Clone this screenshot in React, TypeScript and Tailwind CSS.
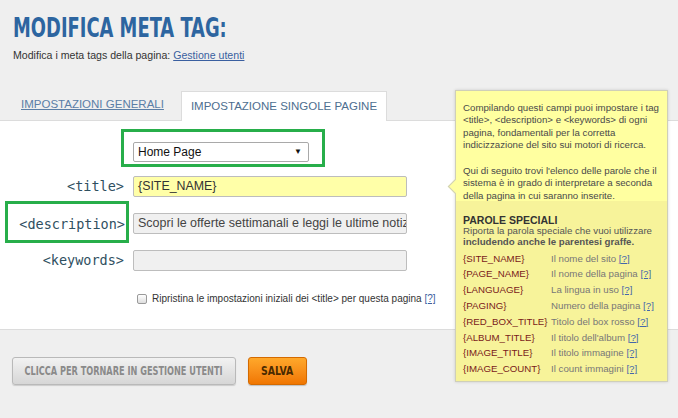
export default function App() {
  const words: [string, string][] = [
    ["{SITE_NAME}", "Il nome del sito"],
    ["{PAGE_NAME}", "Il nome della pagina"],
    ["{LANGUAGE}", "La lingua in uso"],
    ["{PAGING}", "Numero della pagina"],
    ["{RED_BOX_TITLE}", "Titolo del box rosso"],
    ["{ALBUM_TITLE}", "Il titolo dell'album"],
    ["{IMAGE_TITLE}", "Il titolo immagine"],
    ["{IMAGE_COUNT}", "Il count immagini"],
  ];
  return (
    <div className="relative w-[678px] h-[418px] overflow-hidden bg-[#efefef] font-['Liberation_Sans',Arial,sans-serif] text-[#333]">
      {/* Header */}
      <div className="pl-[13px] pt-[13px]">
        <h1 className="h-[30px] font-['DejaVu_Sans_Condensed',sans-serif] font-bold text-[26px] leading-[30px] text-[#2d65a0] whitespace-nowrap">
          <span className="inline-block origin-left scale-x-[0.765]">MODIFICA META TAG:</span>
        </h1>
        <p className="mt-[5px] text-[10.6px] leading-[14px] text-[#333]">
          Modifica i meta tags della pagina:{" "}
          <a className="text-[#3a5fa0] underline">Gestione utenti</a>
        </p>
      </div>

      {/* Tabs */}
      <div className="mt-[29px] flex items-end h-[29px] pl-[21px]">
        <span className="text-[11.5px] leading-[14px] mb-[9px] text-[#5b7ea6] underline whitespace-nowrap">IMPOSTAZIONI GENERALI</span>
        <div className="ml-[17px] h-[30px] -mb-px bg-white border border-b-0 border-[#dcdcdc] px-[9px] flex items-center text-[11.5px] text-[#4d6e8f] relative z-10 whitespace-nowrap">
          IMPOSTAZIONE SINGOLE PAGINE
        </div>
      </div>

      {/* Panel */}
      <div className="h-[210px] bg-white border-t border-b border-[#dcdcdc] pt-[8px]">
        <div className="ml-[121px] w-[204px] h-[38px] border-[3px] border-[#27ae4a] pl-[9px] pt-[10px]">
          <div className="w-[176px] h-[20px] border border-[#a9a9a9] rounded-[2px] bg-white flex items-center justify-between pl-[4px] pr-[6px] text-[12px] text-[#111]">
            <span>Home Page</span>
            <span className="text-[8px]">▼</span>
          </div>
        </div>

        {/* title row */}
        <div className="mt-[9px] flex items-center">
          <div className="w-[129px] pr-[5px] text-right font-['DejaVu_Sans_Mono',monospace] text-[13.5px] text-[#2f4f5f]">&lt;title&gt;</div>
          <div className="ml-[4px] w-[274px] h-[21px] border border-[#bdbdbd] rounded-[2px] bg-[#ffffa8] pl-[4px] flex items-center text-[12.4px] text-[#333]">
            {"{SITE_NAME}"}
          </div>
        </div>

        {/* description row */}
        <div className="mt-[4px] flex items-start">
          <div className="w-[129px] flex justify-end">
            <div className="w-[124px] h-[42px] border-[3px] border-[#27ae4a] flex items-center justify-end pr-[1px] pt-[4px] font-['DejaVu_Sans_Mono',monospace] text-[13.5px] text-[#2f4f5f]">
              &lt;description&gt;
            </div>
          </div>
          <div className="mt-[12px] ml-[4px] w-[274px] h-[21px] border border-[#bdbdbd] rounded-[2px] bg-[#f0f0f0] pl-[4px] flex items-center text-[12.5px] text-[#444] overflow-hidden whitespace-nowrap">
            Scopri le offerte settimanali e leggi le ultime notizie
          </div>
        </div>

        {/* keywords row */}
        <div className="mt-[7px] flex items-center">
          <div className="w-[129px] pr-[5px] text-right font-['DejaVu_Sans_Mono',monospace] text-[13.5px] text-[#2f4f5f]">&lt;keywords&gt;</div>
          <div className="ml-[4px] w-[274px] h-[21px] border border-[#bdbdbd] rounded-[2px] bg-[#f0f0f0]" />
        </div>

        {/* checkbox row */}
        <div className="mt-[20px] ml-[137px] flex items-center text-[10px] text-[#333]">
          <span className="w-[10px] h-[10px] border border-[#9a9a9a] rounded-[2px] bg-gradient-to-b from-white to-[#dedede]" />
          <span className="ml-[5px] whitespace-nowrap">
            Ripristina le impostazioni iniziali dei &lt;title&gt; per questa pagina{" "}
            <span className="text-[#3a5fa0] underline">[?]</span>
          </span>
        </div>
      </div>

      {/* Buttons */}
      <div className="mt-[27px] ml-[12px] flex gap-[12px]">
        <div className="w-[224px] h-[28px] rounded-[3px] border border-[#b9b9b9] bg-gradient-to-b from-[#f2f2f2] to-[#d6d6d6] flex items-center justify-center font-['DejaVu_Sans_Condensed',sans-serif] font-bold text-[13px] text-[#8a8a8a] shadow-[0_1px_1px_rgba(0,0,0,0.15)] whitespace-nowrap">
          <span className="inline-block scale-x-[0.7]">CLICCA PER TORNARE IN GESTIONE UTENTI</span>
        </div>
        <div className="w-[59px] h-[28px] rounded-[3px] border border-[#d46a00] bg-gradient-to-b from-[#ffa82a] to-[#f07600] flex items-center justify-center font-['DejaVu_Sans_Condensed',sans-serif] font-bold text-[13px] text-[#4a2a00] shadow-[0_1px_1px_rgba(0,0,0,0.2)]">
          <span className="inline-block scale-x-[0.8]">SALVA</span>
        </div>
      </div>

      {/* Tooltip */}
      <div className="absolute left-[455px] top-[90px] w-[213px] h-[292px] border border-[#cfcfb8] bg-[#ffffa0] shadow-[0_0_3px_rgba(0,0,0,0.15)] text-[9.7px] text-[#4a4a4a] z-20 whitespace-nowrap">
        <div className="absolute left-[-6px] top-[90px] w-[11px] h-[11px] rotate-45 bg-[#ffffa0] border-l border-b border-[#cfcfb8]" />
        <div className="relative px-[7px] pt-[11px] leading-[12.3px] h-[110px]">
          <p>
            Compilando questi campi puoi impostare i tag
            <br />
            &lt;title&gt;, &lt;description&gt; e &lt;keywords&gt; di ogni
            <br />
            pagina, fondamentali per la corretta
            <br />
            indicizzazione del sito sui motori di ricerca.
          </p>
          <p className="mt-[14px]">
            Qui di seguito trovi l'elenco delle parole che il
            <br />
            sistema è in grado di interpretare a seconda
            <br />
            della pagina in cui saranno inserite.
          </p>
        </div>
        <div className="relative h-[180px] bg-[#f7f39a] px-[7px] pt-[14px]">
          <div className="font-bold text-[10.5px] leading-[11px] text-[#333]">PAROLE SPECIALI</div>
          <div className="leading-[10.5px] text-[#555]">
            Riporta la parola speciale che vuoi utilizzare
            <br />
            <b>includendo anche le parentesi graffe.</b>
          </div>
          <div className="mt-[4px]">
            {words.map(([k, d]) => (
              <div key={k} className="flex h-[15.8px] items-center">
                <span className="w-[88px] text-[#7a1a1a]">{k}</span>
                <span className="text-[#777]">
                  {d} <span className="text-[#4466aa] underline">[?]</span>
                </span>
              </div>
            ))}
          </div>
        </div>
      </div>
    </div>
  );
}
